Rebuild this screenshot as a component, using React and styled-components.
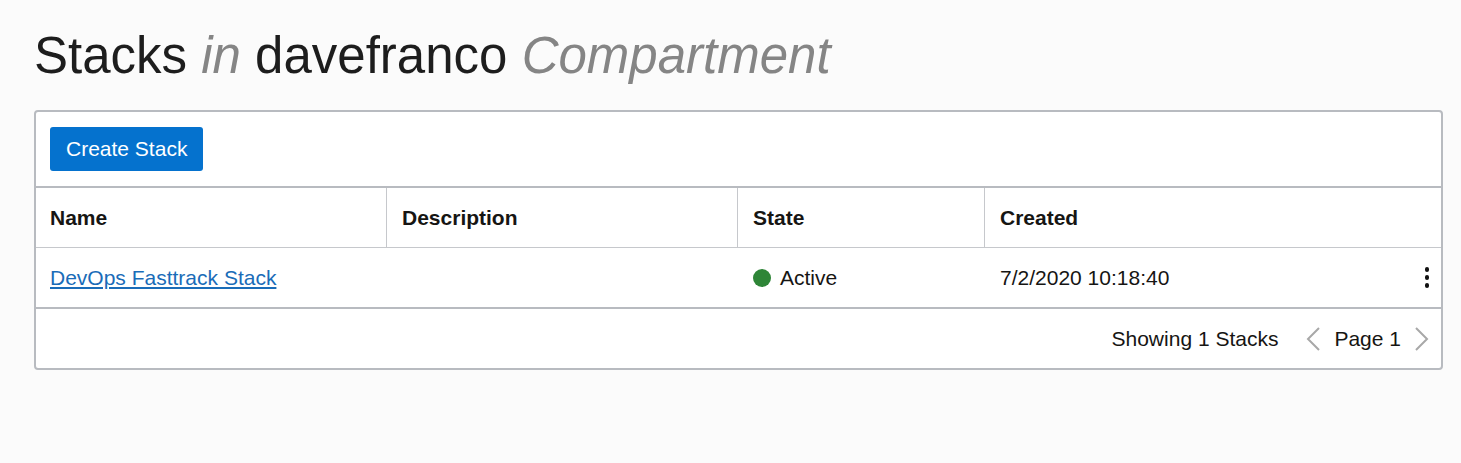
import React from "react";
import styled, { createGlobalStyle } from "styled-components";

const Global = createGlobalStyle`
  html, body { margin: 0; padding: 0; background: #fbfbfb; }
  body { font-family: "Liberation Sans", Arial, sans-serif; color: #161513; }
`;

const Page = styled.div`
  padding: 23px 19px 0 34px;
`;

const Title = styled.h1`
  margin: 0 0 21px;
  font-size: 51px;
  font-weight: 400;
  line-height: 66px;
  color: #1d1d1d;
`;

const Muted = styled.em`
  color: #858585;
  font-style: italic;
`;

const Panel = styled.div`
  border: 2px solid #b8bbc0;
  border-radius: 4px;
  background: #fff;
  width: 1405px;
`;

const Toolbar = styled.div`
  display: flex;
  align-items: center;
  padding: 14px;
  border-bottom: 2px solid #b8bbc0;
  height: 46px;
`;

const Button = styled.button`
  height: 44px;
  padding: 0 16px;
  border: none;
  border-radius: 3px;
  background: #0572ce;
  color: #fff;
  font-family: "Liberation Sans", Arial, sans-serif;
  font-size: 21px;
`;

const Grid = styled.div`
  display: grid;
  grid-template-columns: 351px 351px 247px 1fr;
`;

const HeadCell = styled.div`
  height: 59px;
  display: flex;
  align-items: center;
  padding: 0 15px;
  padding-left: ${(p) => (p.first ? "14px" : "15px")};
  font-weight: 700;
  font-size: 21px;
  border-bottom: 1px solid #c6c8cc;
  border-left: ${(p) => (p.first ? "none" : "1px solid #c6c8cc")};
  margin-left: ${(p) => (p.first ? "0" : "-1px")};
`;

const Cell = styled.div`
  height: 59px;
  display: flex;
  align-items: center;
  padding: 0 ${(p) => (p.end ? "12px" : "15px")} 0 ${(p) => (p.first ? "14px" : "15px")};
  font-size: 21px;
  border-bottom: 2px solid #b8bbc0;
  justify-content: ${(p) => (p.end ? "space-between" : "flex-start")};
`;

const Link = styled.a`
  color: #1a6cb8;
  text-decoration: underline;
`;

const Dot = styled.span`
  width: 18px;
  height: 18px;
  border-radius: 50%;
  background: #2e8537;
  margin-right: 9px;
  display: inline-block;
`;

const Kebab = styled.span`
  display: flex;
  flex-direction: column;
  gap: 3.5px;
  i {
    width: 4.5px;
    height: 4.5px;
    border-radius: 50%;
    background: #111;
    display: block;
  }
`;

const Footer = styled.div`
  height: 59px;
  display: flex;
  align-items: center;
  justify-content: flex-end;
  padding-right: 11px;
  font-size: 21px;
`;

const Showing = styled.span`
  margin-right: 27px;
`;

const PageLabel = styled.span`
  margin: 0 13px 0 13px;
`;

const Chevron = ({ dir }) => (
  <svg width="16" height="26" viewBox="0 0 16 26">
    <path
      d={dir === "left" ? "M14 2 L3 13 L14 24" : "M2 2 L13 13 L2 24"}
      fill="none"
      stroke="#a8a8a8"
      strokeWidth="2"
    />
  </svg>
);

export default function App() {
  return (
    <Page>
      <Global />
      <Title>
        Stacks <Muted>in</Muted> davefranco <Muted>Compartment</Muted>
      </Title>
      <Panel>
        <Toolbar>
          <Button>Create Stack</Button>
        </Toolbar>
        <Grid>
          <HeadCell first>Name</HeadCell>
          <HeadCell>Description</HeadCell>
          <HeadCell>State</HeadCell>
          <HeadCell>Created</HeadCell>
          <Cell first>
            <Link href="#">DevOps Fasttrack Stack</Link>
          </Cell>
          <Cell />
          <Cell>
            <Dot />
            Active
          </Cell>
          <Cell end>
            7/2/2020 10:18:40
            <Kebab>
              <i />
              <i />
              <i />
            </Kebab>
          </Cell>
        </Grid>
        <Footer>
          <Showing>Showing 1 Stacks</Showing>
          <Chevron dir="left" />
          <PageLabel>Page 1</PageLabel>
          <Chevron dir="right" />
        </Footer>
      </Panel>
    </Page>
  );
}
